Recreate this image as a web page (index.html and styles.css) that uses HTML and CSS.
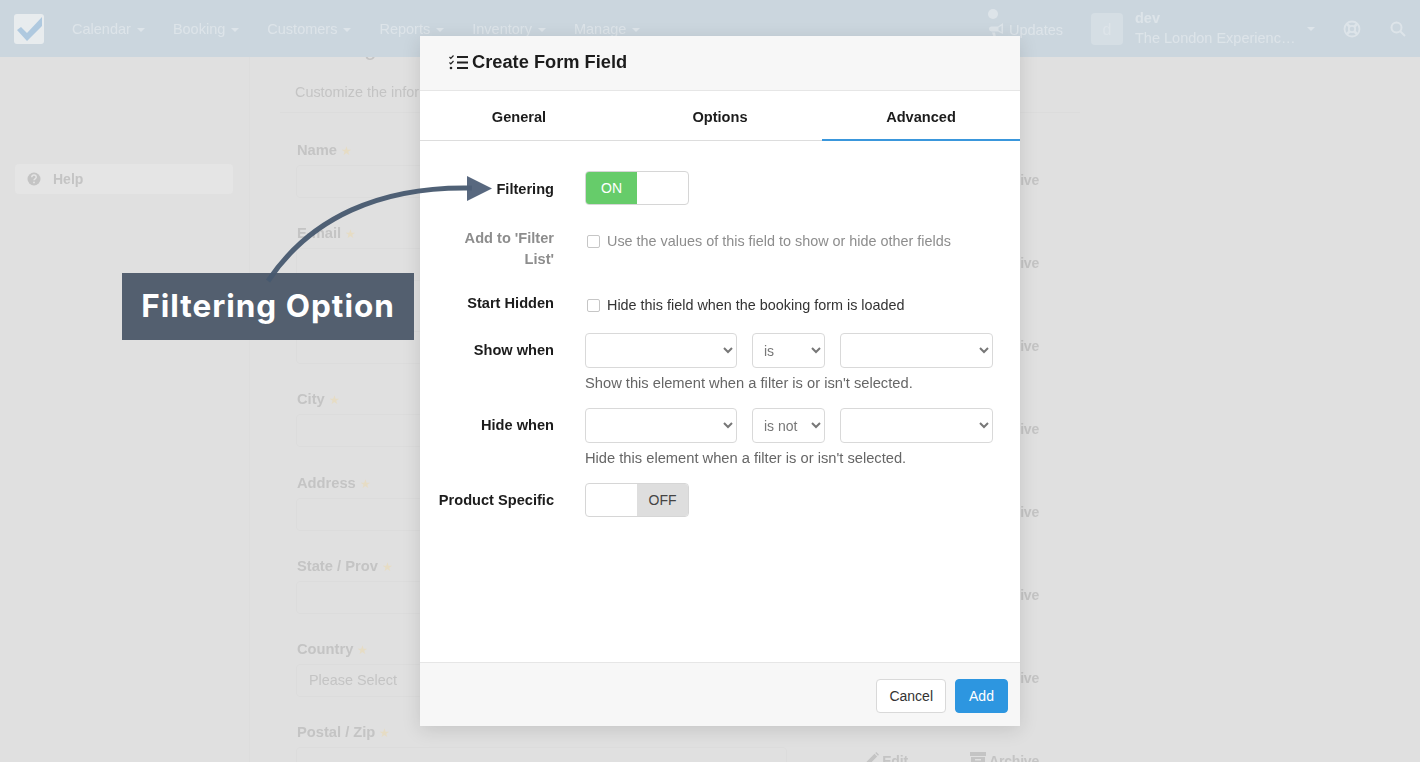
FILE: index.html
```html
<!DOCTYPE html>
<html lang="en">
<head>
  <meta charset="UTF-8">
  <title>Create Form Field</title>
  <link rel="stylesheet" href="styles.css">
</head>
<body>
  <svg class="defs" width="0" height="0">
    <symbol id="pencil" viewBox="0 0 14 14"><path d="M1 13l.8-3.500L9.500 1.800l2.700 2.700-7.700 7.700zM10.300 1l1-1L14 2.700l-1 1z" fill="#c4c4c4"/></symbol>
    <symbol id="archive" viewBox="0 0 16 14"><path d="M0 0h16v4H0zM1 5h14v9H1zM5 7v1.500h6V7z" fill="#c4c4c4" fill-rule="evenodd"/></symbol>
  </svg>
  <div class="page">
    <div class="navbar">
      <div class="logo">
        <svg width="30" height="30" viewBox="0 0 30 30"><rect width="30" height="30" rx="3" fill="#e8ecee"/><path d="M3 16l4-3 6 6L28 3v9L13 27z" fill="#afc9df"/></svg>
      </div>
      <div class="nav-links">
        <a>Calendar <i class="caret"></i></a>
        <a>Booking <i class="caret"></i></a>
        <a>Customers <i class="caret"></i></a>
        <a>Reports <i class="caret"></i></a>
        <a>Inventory <i class="caret"></i></a>
        <a>Manage <i class="caret"></i></a>
      </div>
      <div class="nav-right">
        <div class="updates">
          <span class="dot"></span>
          <svg width="17" height="16" viewBox="0 0 17 16"><path d="M15 1v11L10 9.500H3.500a2 2 0 0 1 0-5H10zM13.500 3.800L10.500 5.600v2.700l3 1.800zM4 10.500h3l1 4.500H5.500z" fill="#dde4e9" fill-rule="evenodd"/></svg>
          <span>Updates</span>
        </div>
        <div class="avatar">d</div>
        <div class="account">
          <b>dev</b>
          <span>The London Experienc…</span>
        </div>
        <i class="caret account-caret"></i>
        <svg class="lifering" width="18" height="18" viewBox="0 0 18 18" fill="none" stroke="#dde4e9"><circle cx="9" cy="9" r="7.500" stroke-width="1.800"/><circle cx="9" cy="9" r="3.200" stroke-width="1.800"/><path d="M3.500 3.500l3 3M14.500 3.500l-3 3M3.500 14.500l3-3M14.500 14.500l-3-3" stroke-width="2.600"/></svg>
        <svg class="search" width="16" height="16" viewBox="0 0 16 16" fill="none" stroke="#dde4e9" stroke-width="2"><circle cx="6.500" cy="6.500" r="5"/><path d="M10 10l5 5"/></svg>
      </div>
    </div>

    <div class="layout">
      <div class="sidebar">
        <div class="help">
          <svg width="14" height="14" viewBox="0 0 14 14"><circle cx="7" cy="7" r="6.500" fill="#c4c4c4"/><path d="M4.800 5.300A2.200 2.200 0 0 1 9.200 5.300c0 1.500-2.200 1.500-2.200 3" fill="none" stroke="#e5e5e5" stroke-width="1.500"/><circle cx="7" cy="10.400" r=".9" fill="#e5e5e5"/></svg>
          <span>Help</span>
        </div>
      </div>
      <div class="content">
        <h2>Booking Form</h2>
        <p class="subtitle">Customize the information you collect from customers</p>
        <div class="fields">
          <div class="field"><label>Name <em>★</em></label><div class="input"></div><div class="actions"><span><svg width="14" height="14"><use href="#pencil"/></svg> Edit</span><span><svg width="16" height="14"><use href="#archive"/></svg> Archive</span></div></div>
          <div class="field"><label>E-mail <em>★</em></label><div class="input"></div><div class="actions"><span><svg width="14" height="14"><use href="#pencil"/></svg> Edit</span><span><svg width="16" height="14"><use href="#archive"/></svg> Archive</span></div></div>
          <div class="field"><label>Phone <em>★</em></label><div class="input"></div><div class="actions"><span><svg width="14" height="14"><use href="#pencil"/></svg> Edit</span><span><svg width="16" height="14"><use href="#archive"/></svg> Archive</span></div></div>
          <div class="field"><label>City <em>★</em></label><div class="input"></div><div class="actions"><span><svg width="14" height="14"><use href="#pencil"/></svg> Edit</span><span><svg width="16" height="14"><use href="#archive"/></svg> Archive</span></div></div>
          <div class="field"><label>Address <em>★</em></label><div class="input"></div><div class="actions"><span><svg width="14" height="14"><use href="#pencil"/></svg> Edit</span><span><svg width="16" height="14"><use href="#archive"/></svg> Archive</span></div></div>
          <div class="field"><label>State / Prov <em>★</em></label><div class="input"></div><div class="actions"><span><svg width="14" height="14"><use href="#pencil"/></svg> Edit</span><span><svg width="16" height="14"><use href="#archive"/></svg> Archive</span></div></div>
          <div class="field"><label>Country <em>★</em></label><div class="input">Please Select</div><div class="actions"><span><svg width="14" height="14"><use href="#pencil"/></svg> Edit</span><span><svg width="16" height="14"><use href="#archive"/></svg> Archive</span></div></div>
          <div class="field"><label>Postal / Zip <em>★</em></label><div class="input"></div><div class="actions"><span><svg width="14" height="14"><use href="#pencil"/></svg> Edit</span><span><svg width="16" height="14"><use href="#archive"/></svg> Archive</span></div></div>
        </div>
      </div>
    </div>
  </div>

  <div class="modal">
    <div class="modal-header">
      <svg width="19" height="15" viewBox="0 0 19 15" fill="none" stroke="#222"><path d="M8 2h11M8 7.500h11M8 13h11" stroke-width="1.800"/><path d="M.5 2l1.300 1.300L4.500.5M.5 7.500l1.300 1.300L4.500 6" stroke-width="1.200"/><circle cx="2" cy="13" r="1.300" fill="#222" stroke="none"/></svg>
      <h3>Create Form Field</h3>
    </div>
    <div class="tabs">
      <div class="tab">General</div>
      <div class="tab">Options</div>
      <div class="tab active">Advanced</div>
    </div>
    <div class="modal-body">
      <div class="row row-filtering">
        <div class="row-label">Filtering</div>
        <div class="toggle"><span class="toggle-on">ON</span><span class="toggle-blank"></span></div>
      </div>
      <div class="row row-filter-list">
        <div class="row-label muted">Add to 'Filter List'</div>
        <label class="check muted"><input type="checkbox" disabled> Use the values of this field to show or hide other fields</label>
      </div>
      <div class="row row-hidden">
        <div class="row-label">Start Hidden</div>
        <label class="check"><input type="checkbox"> Hide this field when the booking form is loaded</label>
      </div>
      <div class="row row-when">
        <div class="row-label">Show when</div>
        <div>
          <div class="selects">
            <select class="sel-a"><option></option></select>
            <select class="sel-b"><option>is</option></select>
            <select class="sel-c"><option></option></select>
          </div>
          <div class="hint">Show this element when a filter is or isn't selected.</div>
        </div>
      </div>
      <div class="row row-when">
        <div class="row-label">Hide when</div>
        <div>
          <div class="selects">
            <select class="sel-a"><option></option></select>
            <select class="sel-b"><option>is not</option></select>
            <select class="sel-c"><option></option></select>
          </div>
          <div class="hint">Hide this element when a filter is or isn't selected.</div>
        </div>
      </div>
      <div class="row">
        <div class="row-label">Product Specific</div>
        <div class="toggle"><span class="toggle-blank"></span><span class="toggle-off">OFF</span></div>
      </div>
    </div>
    <div class="modal-footer">
      <button class="btn">Cancel</button>
      <button class="btn btn-primary">Add</button>
    </div>
  </div>

  <div class="callout">Filtering Option</div>
  <svg class="arrow" width="1420" height="762" viewBox="0 0 1420 762">
    <path d="M268 281C310 218 380 186 472 188" fill="none" stroke="#47586f" stroke-opacity=".95" stroke-width="5"/>
    <path d="M467 176L492 188.500 467 201z" fill="#4f6078" fill-opacity=".95"/>
  </svg>
</body>
</html>
```

FILE: styles.css
```css
* {
  box-sizing: border-box;
}
html, body {
  height: 100%;
}
body {
  margin: 0;
  overflow: hidden;
  font-family: "Liberation Sans", Arial, sans-serif;
  font-size: 14px;
  background: #e0e0e0;
  color: #333;
}
.defs {
  position: absolute;
}
.page {
  height: 762px;
  overflow: hidden;
  filter: blur(0.4px);
}
.navbar {
  position: relative;
  z-index: 2;
  height: 57px;
  background: #cbd6de;
  color: #dde4e9;
  font-size: 14.5px;
  display: flex;
  align-items: center;
}
.logo {
  margin-left: 14px;
  width: 30px;
  height: 30px;
}
.nav-links {
  display: flex;
  margin-left: 28px;
  gap: 28px;
}
.caret {
  display: inline-block;
  border: 4px solid transparent;
  border-top-color: #dde4e9;
  border-bottom: 0;
  margin-left: 2px;
  vertical-align: 2px;
}
.nav-right {
  margin-left: auto;
  display: flex;
  align-items: center;
}
.updates {
  position: relative;
  display: flex;
  align-items: center;
  gap: 4px;
  margin-top: 2px;
}
.dot {
  position: absolute;
  left: 0;
  top: -13px;
  width: 10px;
  height: 10px;
  border-radius: 50%;
  background: #dde4e9;
}
.avatar {
  width: 32px;
  height: 32px;
  margin-left: 28px;
  border-radius: 4px;
  background: #d5dee4;
  text-align: center;
  line-height: 34px;
  font-size: 16px;
}
.account {
  display: flex;
  flex-direction: column;
  gap: 4px;
  margin: -2px 0 0 12px;
  width: 172px;
  line-height: 16px;
}
.account-caret {
  margin-left: 0;
}
.lifering {
  margin-left: 28px;
}
.search {
  margin-left: 29px;
  margin-right: 14px;
}
.layout {
  display: flex;
  height: 705px;
}
.sidebar {
  width: 250px;
  flex: none;
  padding: 107px 16px 0 15px;
  border-right: 1px solid #dddddd;
}
.help {
  height: 30px;
  display: flex;
  align-items: center;
  gap: 12px;
  padding-left: 12px;
  border-radius: 4px;
  background: #e5e5e5;
  color: #c4c4c4;
  font-weight: bold;
}
.content {
  width: 800px;
  margin-left: 30px;
  flex: none;
  color: #c4c4c4;
}
.content h2 {
  margin: -23px 0 0 17px;
  height: 30px;
  font-size: 22px;
  line-height: 28px;
  font-weight: normal;
}
.subtitle {
  margin: 0;
  padding: 20px 0 0 15px;
  height: 49px;
  border-bottom: 1px solid #dcdcdc;
  font-size: 14.4px;
  line-height: 17px;
}
.fields {
  padding: 29px 41px 0 16px;
}
.field {
  display: grid;
  grid-template-columns: 491px 1fr;
  grid-template-rows: 17px 33px;
  row-gap: 6px;
  height: 83.15px;
}
.field label {
  grid-column: 1 / 3;
  padding-left: 1px;
  font-size: 14.7px;
  font-weight: bold;
  line-height: 17px;
}
.field em {
  font-style: normal;
  font-weight: normal;
  font-size: 12px;
  color: #e6dcc4;
}
.input {
  border: 1px solid #dcdcdc;
  border-radius: 4px;
  padding: 0 12px;
  font-size: 14.4px;
  line-height: 31px;
}
.actions {
  display: flex;
  justify-content: flex-end;
  gap: 62px;
  padding-bottom: 5px;
  align-items: center;
  font-weight: bold;
  letter-spacing: -0.2px;
}
.modal {
  position: absolute;
  left: 420px;
  top: 36px;
  width: 600px;
  height: 690px;
  background: #fff;
  display: flex;
  flex-direction: column;
  box-shadow: 0 4px 18px rgba(0, 0, 0, 0.12);
  color: #1c1c1c;
  filter: blur(0.25px);
}
.modal-header {
  height: 55px;
  flex: none;
  display: flex;
  align-items: center;
  gap: 4px;
  padding: 0 0 2px 29px;
  background: #f7f7f7;
  border-bottom: 1px solid #e6e6e6;
}
.modal-header h3 {
  margin: 0;
  font-size: 18.25px;
}
.tabs {
  height: 50px;
  flex: none;
  display: grid;
  grid-template-columns: 198px 204px 198px;
  border-bottom: 1px solid #ddd;
}
.tab {
  text-align: center;
  line-height: 52px;
  font-size: 14.6px;
  font-weight: bold;
}
.tab.active {
  border-bottom: 2px solid #3a97dc;
  height: 50px;
}
.modal-body {
  flex: 1;
  padding-top: 30px;
}
.row {
  display: flex;
  align-items: flex-start;
}
.row-label {
  width: 134px;
  margin-right: 31px;
  flex: none;
  text-align: right;
  font-size: 14.6px;
  font-weight: bold;
  line-height: 21px;
  padding-top: 7px;
}
.muted {
  color: #8d8d8d;
}
.row-filtering {
  height: 57px;
}
.row-filtering .row-label {
  padding-top: 8px;
}
.row-filter-list {
  height: 65px;
}
.row-filter-list .row-label {
  padding: 0 0 0 30px;
}
.row-filter-list .check {
  padding-top: 5px;
}
.row-hidden {
  height: 40px;
}
.row-hidden .row-label {
  padding-top: 0;
}
.row-hidden .check {
  padding-top: 4px;
}
.row-when {
  height: 75px;
}
.toggle {
  width: 104px;
  height: 34px;
  display: flex;
  border: 1px solid #d6d6d6;
  border-radius: 4px;
  overflow: hidden;
  line-height: 32px;
  text-align: center;
}
.toggle span {
  width: 52px;
}
.toggle-on {
  background: #66cc6a;
  color: #fff;
}
.toggle-off {
  background: #dedede;
  color: #444;
}
.check {
  display: flex;
  align-items: center;
  font-size: 14.4px;
  line-height: 17px;
  color: #333;
}
.check.muted {
  color: #8d8d8d;
}
.check input {
  appearance: none;
  width: 13px;
  height: 13px;
  margin: 0 7px 0 2px;
  border: 1px solid #c6c6c6;
  border-radius: 2px;
  background: #fff;
}
.selects {
  display: flex;
  gap: 15px;
}
.selects select {
  height: 35px;
  padding: 0 7px;
  border: 1px solid #d9d9d9;
  border-radius: 4px;
  background: #fff;
  color: #777;
  font-family: inherit;
  font-size: 14px;
}
.sel-a {
  width: 152px;
}
.sel-b {
  width: 73px;
}
.sel-c {
  width: 153px;
}
.hint {
  margin-top: 7px;
  color: #666;
  font-size: 14.7px;
  line-height: 16px;
}
.modal-footer {
  height: 64px;
  flex: none;
  display: flex;
  justify-content: flex-end;
  gap: 9px;
  padding: 16px 12px 0 0;
  background: #f7f7f7;
  border-top: 1px solid #e6e6e6;
}
.btn {
  height: 34px;
  padding: 0 12px;
  border: 1px solid #d9d9d9;
  border-radius: 4px;
  background: #fff;
  color: #333;
  font-family: inherit;
  font-size: 14px;
}
.btn-primary {
  width: 53px;
  border-color: #2d96e0;
  background: #2d96e0;
  color: #fff;
}
.callout {
  position: absolute;
  left: 122px;
  top: 273px;
  width: 292px;
  height: 67px;
  background: #535f6f;
  color: #fff;
  font-family: Inter, sans-serif;
  font-weight: 700;
  font-size: 31.5px;
  letter-spacing: 1px;
  line-height: 66px;
  text-align: center;
  white-space: nowrap;
}
.arrow {
  position: absolute;
  left: 0;
  top: 0;
  pointer-events: none;
}
```
